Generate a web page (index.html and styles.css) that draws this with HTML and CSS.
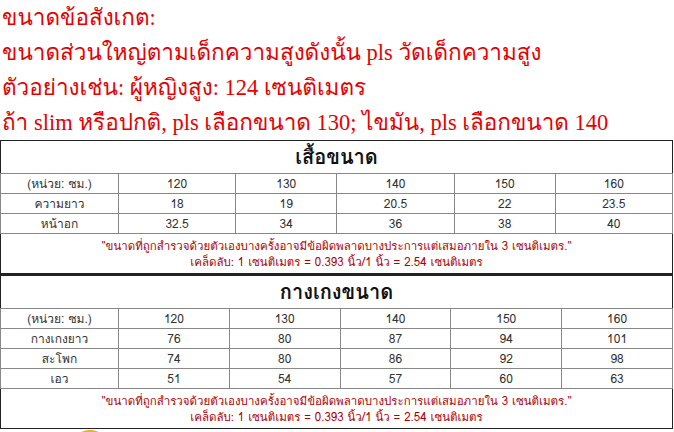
FILE: index.html
```html
<!DOCTYPE html>
<html lang="th">
<head>
<meta charset="utf-8">
<link rel="stylesheet" href="styles.css">
</head>
<body>
<div class="notes">
  <p>ขนาดข้อสังเกต:</p>
  <p>ขนาดส่วนใหญ่ตามเด็กความสูงดังนั้น pls วัดเด็กความสูง</p>
  <p>ตัวอย่างเช่น: ผู้หญิงสูง: 124 เซนติเมตร</p>
  <p>ถ้า slim หรือปกติ, pls เลือกขนาด 130; ไขมัน, pls เลือกขนาด 140</p>
</div>
<table class="size">
  <tr class="head"><th colspan="6" class="title">เสื้อขนาด</th></tr>
  <tr><td class="lbl">(หน่วย: ซม.)</td><td>120</td><td>130</td><td>140</td><td>150</td><td>160</td></tr>
  <tr><td class="lbl">ความยาว</td><td>18</td><td>19</td><td>20.5</td><td>22</td><td>23.5</td></tr>
  <tr><td class="lbl">หน้าอก</td><td>32.5</td><td>34</td><td>36</td><td>38</td><td>40</td></tr>
  <tr class="foot"><td colspan="6" class="note">"ขนาดที่ถูกสำรวจด้วยตัวเองบางครั้งอาจมีข้อผิดพลาดบางประการแต่เสมอภายใน 3 เซนติเมตร."<br>เคล็ดลับ: 1 เซนติเมตร = 0.393 นิ้ว/1 นิ้ว = 2.54 เซนติเมตร</td></tr>
</table>
<table class="size">
  <tr class="head"><th colspan="6" class="title">กางเกงขนาด</th></tr>
  <tr><td class="lbl">(หน่วย: ซม.)</td><td>120</td><td>130</td><td>140</td><td>150</td><td>160</td></tr>
  <tr><td class="lbl">กางเกงยาว</td><td>76</td><td>80</td><td>87</td><td>94</td><td>101</td></tr>
  <tr><td class="lbl">สะโพก</td><td>74</td><td>80</td><td>86</td><td>92</td><td>98</td></tr>
  <tr><td class="lbl">เอว</td><td>51</td><td>54</td><td>57</td><td>60</td><td>63</td></tr>
  <tr class="foot"><td colspan="6" class="note">"ขนาดที่ถูกสำรวจด้วยตัวเองบางครั้งอาจมีข้อผิดพลาดบางประการแต่เสมอภายใน 3 เซนติเมตร."<br>เคล็ดลับ: 1 เซนติเมตร = 0.393 นิ้ว/1 นิ้ว = 2.54 เซนติเมตร</td></tr>
</table>
<div class="strip">
  <span class="coin"></span>
  <span class="band"></span>
</div>
</body>
</html>
```
FILE: styles.css
```css
html, body { margin: 0; padding: 0; background: #fff; }
body { width: 674px; height: 432px; overflow: hidden; }
.notes { padding-left: 2px; color: #e60000; font-family: "Liberation Serif", "Norasi", "Garuda", "Loma", "Noto Serif Thai", "Noto Sans Thai", serif; font-size: 22.5px; line-height: 35px; }
.notes p { margin: 0; white-space: nowrap; }
.size { width: 673px; border-collapse: collapse; border: 1px solid #222; font-family: "Tahoma", "Loma", "Garuda", "Noto Sans Thai", "Noto Sans", sans-serif; font-size: 12px; color: #333; }
.size + .size { border-top: 2px solid #222; }
.size tr.head { height: 31px; }
.size tr { height: 20px; }
.size tr.foot { height: 40px; }
.size th.title { padding: 0; font-size: 20px; font-weight: bold; color: #111; text-align: center; border-bottom: 1px solid #888; }
.size td { padding: 0; line-height: 18px; text-align: center; border: 1px solid #888; }
.size td.lbl { width: 117px; }
.size td.note { color: #b00000; font-size: 11.5px; line-height: 16px; border: none; border-top: 1px solid #888; vertical-align: middle; }
.strip { position: relative; height: 6px; }
.coin { position: absolute; left: 72px; top: 1px; width: 36px; height: 36px; border-radius: 50%; background: #f2a830; }
.band { position: absolute; left: 210px; right: 0; top: 3px; height: 4px; background: #cfe0ea; }
```
